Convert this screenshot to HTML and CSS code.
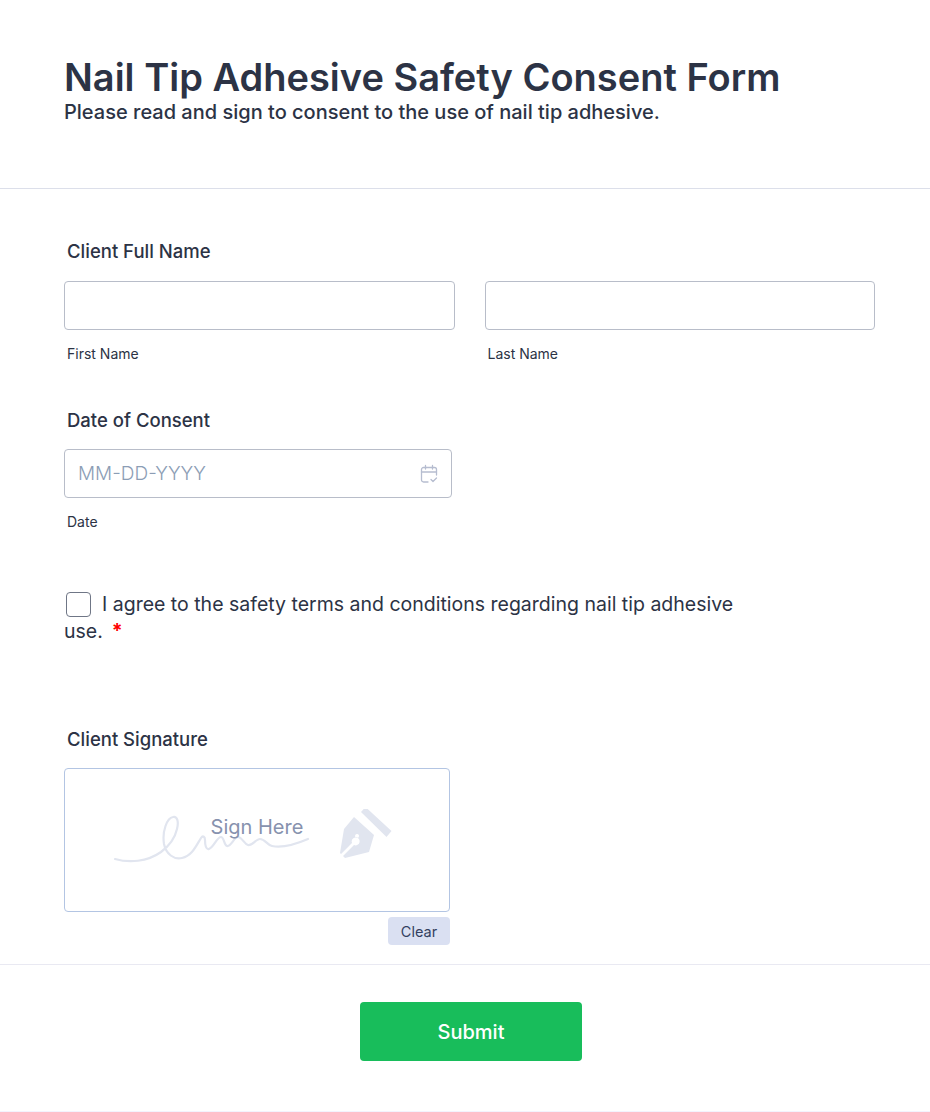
FILE: index.html
```html
<!DOCTYPE html>
<html lang="en">
<head>
<meta charset="utf-8">
<title>Nail Tip Adhesive Safety Consent Form</title>
<link rel="stylesheet" href="styles.css">
</head>
<body>
<main class="form">
  <header class="head">
    <h1>Nail Tip Adhesive Safety Consent Form</h1>
    <p class="sub">Please read and sign to consent to the use of nail tip adhesive.</p>
  </header>
  <section class="body">
    <div class="field name-field">
      <div class="label">Client Full Name</div>
      <div class="name-row">
        <div class="col"><div class="input"></div><div class="hint">First Name</div></div>
        <div class="col"><div class="input"></div><div class="hint">Last Name</div></div>
      </div>
    </div>
    <div class="field date-field">
      <div class="label">Date of Consent</div>
      <div class="input date">
        <span class="ph">MM-DD-YYYY</span>
        <svg class="cal" width="20" height="20" viewBox="0 0 20 20" fill="none" stroke="#b6bdd0" stroke-width="1.3" stroke-linecap="round" stroke-linejoin="round">
          <path d="M9 18H4.5A2 2 0 0 1 2.5 16V5.5a2 2 0 0 1 2-2h11a2 2 0 0 1 2 2V11"/>
          <path d="M2.5 8h15M6.5 1.5v3.5M13.5 1.5v3.5"/>
          <path d="M12 15.5l2 2 3.5-3.5"/>
        </svg>
      </div>
      <div class="hint">Date</div>
    </div>
    <div class="consent">
      <span class="box"></span><span class="consent-text">I agree to the safety terms and conditions regarding nail tip adhesive use.<span class="req">*</span></span>
    </div>
    <div class="field sig-field">
      <div class="label">Client Signature</div>
      <div class="sig">
        <svg class="sig-art" width="282" height="60" viewBox="0 0 282 60" fill="none">
          <path d="M1 50c14 4 32 3 46-7 8-6 14-14 16-23 2-8 0-13-4-12-6 1-11 14-9 27 2 10 10 16 18 14 10-2 14-12 19-20 2-3 4-1 4 2 0 5 1 10 4 9 5-2 8-12 12-12 3 0 3 8 6 9 4 1 7-9 11-9 4 0 6 7 10 8 4 1 8-6 12-6 5 0 7 6 12 7 9 2 22-1 36-7" stroke="#e1e5ef" stroke-width="2.2" stroke-linecap="round"/>
          <path d="M241 3l4.500-5 26 24-5 6z" fill="#e1e5ef" transform="translate(6 0)"/>
          <path fill-rule="evenodd" d="M246 10l20 18-5 17-24 6 -2-2 11-11a4 4 0 1 0-2-2l-11 11-1-1 4-24zm3 17a2 2 0 1 0 .1 0z" fill="#e1e5ef" transform="translate(-6 -2)"/>
        </svg>
        <span class="sign-here">Sign Here</span>
      </div>
      <div class="clear-row"><button class="clear" type="button">Clear</button></div>
    </div>
  </section>
  <footer class="foot"><button class="submit" type="button">Submit</button></footer>
</main>
</body>
</html>
```
FILE: styles.css
```css
* { box-sizing: border-box; }
html, body { margin: 0; padding: 0; background: #fff; }
body { font-family: Inter, "Liberation Sans", sans-serif; color: #2c3345; }
.form { width: 930px; height: 1112px; border-bottom: 1px solid #f3f3fe; }
.head { height: 189px; padding: 53px 64px 0; border-bottom: 1px solid #dcdfea; }
h1 { margin: 0; font-size: 38px; line-height: 48px; font-weight: 600; }
.sub { margin: 0; font-size: 20px; line-height: 28px; font-weight: 500; margin-top: -3px; }
.body { padding: 0 55px 0 64px; height: 776px; border-bottom: 1px solid #e9e9f2; }
.label { font-size: 18.500px; line-height: 24px; font-weight: 500; padding-left: 3px; }
.name-field { padding-top: 50px; }
.name-row { display: flex; gap: 30px; margin-top: 18px; }
.col { width: 391px; }
.input { height: 49px; border: 1px solid #b8bdc9; border-radius: 4px; background: #fff; }
.hint { font-size: 14px; line-height: 18px; margin-top: 15px; padding-left: 3px; }
.date-field { margin-top: 45px; }
.date-field .label { margin-bottom: 17px; }
.date { width: 388px; display: flex; align-items: center; justify-content: space-between; padding: 0 12px 0 13px; }
.ph { font-size: 19px; color: #8c9db5; font-weight: 300; }
.consent { margin-top: 60px; width: 700px; font-size: 19.500px; line-height: 27px; }
.box { display: inline-block; width: 25px; height: 25px; border: 1.500px solid #6f7686; border-radius: 4px; margin: 0 11px 0 2px; vertical-align: -6px; }
.req { color: #f00; margin-left: 9px; font-weight: 700; }
.sig-field { margin-top: 82px; }
.sig-field .label { margin-bottom: 17px; }
.sig { position: relative; width: 386px; height: 144px; border: 1px solid #b3c5e3; border-radius: 4px; }
.sig-art { position: absolute; left: 49px; top: 40px; }
.sign-here { position: absolute; left: 0; right: 0; top: 44px; text-align: center; font-size: 20px; line-height: 28px; color: #8792ae; }
.clear-row { width: 386px; display: flex; justify-content: flex-end; margin-top: 5px; }
.clear { width: 62px; height: 28px; border: 0; border-radius: 4px; background: #dae0f2; color: #33405f; font: 400 14.500px Inter, sans-serif; padding: 0; }
.foot { display: flex; padding: 37px 0 0 360px; }
.submit { width: 222px; height: 59px; border: 0; border-radius: 4px; background: #18bd5b; color: #fff; font: 500 20px Inter, sans-serif; padding: 0; }
```
